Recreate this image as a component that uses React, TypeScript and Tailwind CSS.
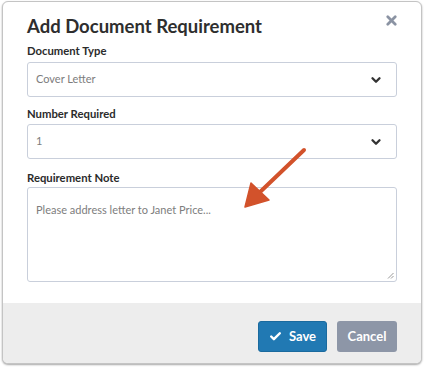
import { Check, ChevronDown, X } from "lucide-react";

function SelectBox({ value, className }: { value: string; className: string }) {
  return (
    <div className={`flex h-[35px] items-center justify-between rounded-[3px] border border-[#c9cfdb] bg-white pl-[8px] pr-[13px] ${className}`}>
      <span className="text-[11px] text-[#7d7d7d]">{value}</span>
      <ChevronDown className="h-[14px] w-[14px] text-[#333]" strokeWidth={4} />
    </div>
  );
}

export default function App() {
  return (
    <div className="h-[367px] w-[424px] bg-white pl-[2px] pt-[1px] font-['Lato','Liberation_Sans',sans-serif]">
      <div className="relative flex h-[363px] w-[420px] flex-col overflow-hidden rounded-[6px] border border-[#c4c4c4] bg-white shadow-[0_1px_2px_rgba(0,0,0,0.35)]">
        <div className="flex-1 px-[24px] pt-[11px]">
          <div className="flex items-start justify-between">
            <h1 className="text-[18.5px] font-bold leading-[26px] text-[#2e2e2e]">
              Add Document Requirement
            </h1>
            <X className="mr-[-2px] mt-[0px] h-[15px] w-[15px] text-[#8b93a3]" strokeWidth={4.5} />
          </div>

          <div className="mt-[3px] text-[11.3px] font-bold leading-[17px] text-[#2b2b2b]">Document Type</div>
          <SelectBox value="Cover Letter" className="mt-[3px]" />

          <div className="mt-[8px] text-[11.3px] font-bold leading-[17px] text-[#2b2b2b]">Number Required</div>
          <SelectBox value="1" className="mt-[2px]" />

          <div className="mt-[10px] text-[11.3px] font-bold leading-[17px] text-[#2b2b2b]">Requirement Note</div>
          <div className="relative mt-[1px] h-[95px] rounded-[3px] border border-[#c9cfdb] bg-white px-[8px] pt-[8px]">
            <span className="text-[11px] leading-[16px] text-[#7d7d7d]">Please address letter to Janet Price...</span>
            <svg className="absolute bottom-[2px] right-[2px]" width="7" height="7" viewBox="0 0 7 7">
              <path d="M6.5 1 L1 6.5 M6.5 4 L4 6.5" stroke="#999" strokeWidth="1" />
            </svg>
          </div>
        </div>

        <div className="flex h-[60px] items-start justify-end gap-[10px] bg-[#ededed] pr-[24px] pt-[18px]">
          <button className="flex h-[31px] w-[69px] items-center justify-center gap-[7px] rounded-[3px] border border-[#1a6a9e] bg-[#2179b3] text-[13px] font-bold text-white">
            <Check className="h-[13px] w-[13px]" strokeWidth={4.5} />
            Save
          </button>
          <button className="flex h-[31px] w-[60px] items-center justify-center rounded-[3px] bg-[#8d96a7] text-[13px] font-bold text-white">
            Cancel
          </button>
        </div>

        <svg className="absolute left-0 top-0" width="424" height="367" viewBox="0 0 424 367">
          <line x1="301" y1="148" x2="256" y2="191" stroke="#d2522b" strokeWidth="4" strokeLinecap="round" />
          <polygon points="242,205 248,181 266,198" fill="#d2522b" stroke="#d2522b" strokeWidth="1.5" strokeLinejoin="round" />
        </svg>
      </div>
    </div>
  );
}
